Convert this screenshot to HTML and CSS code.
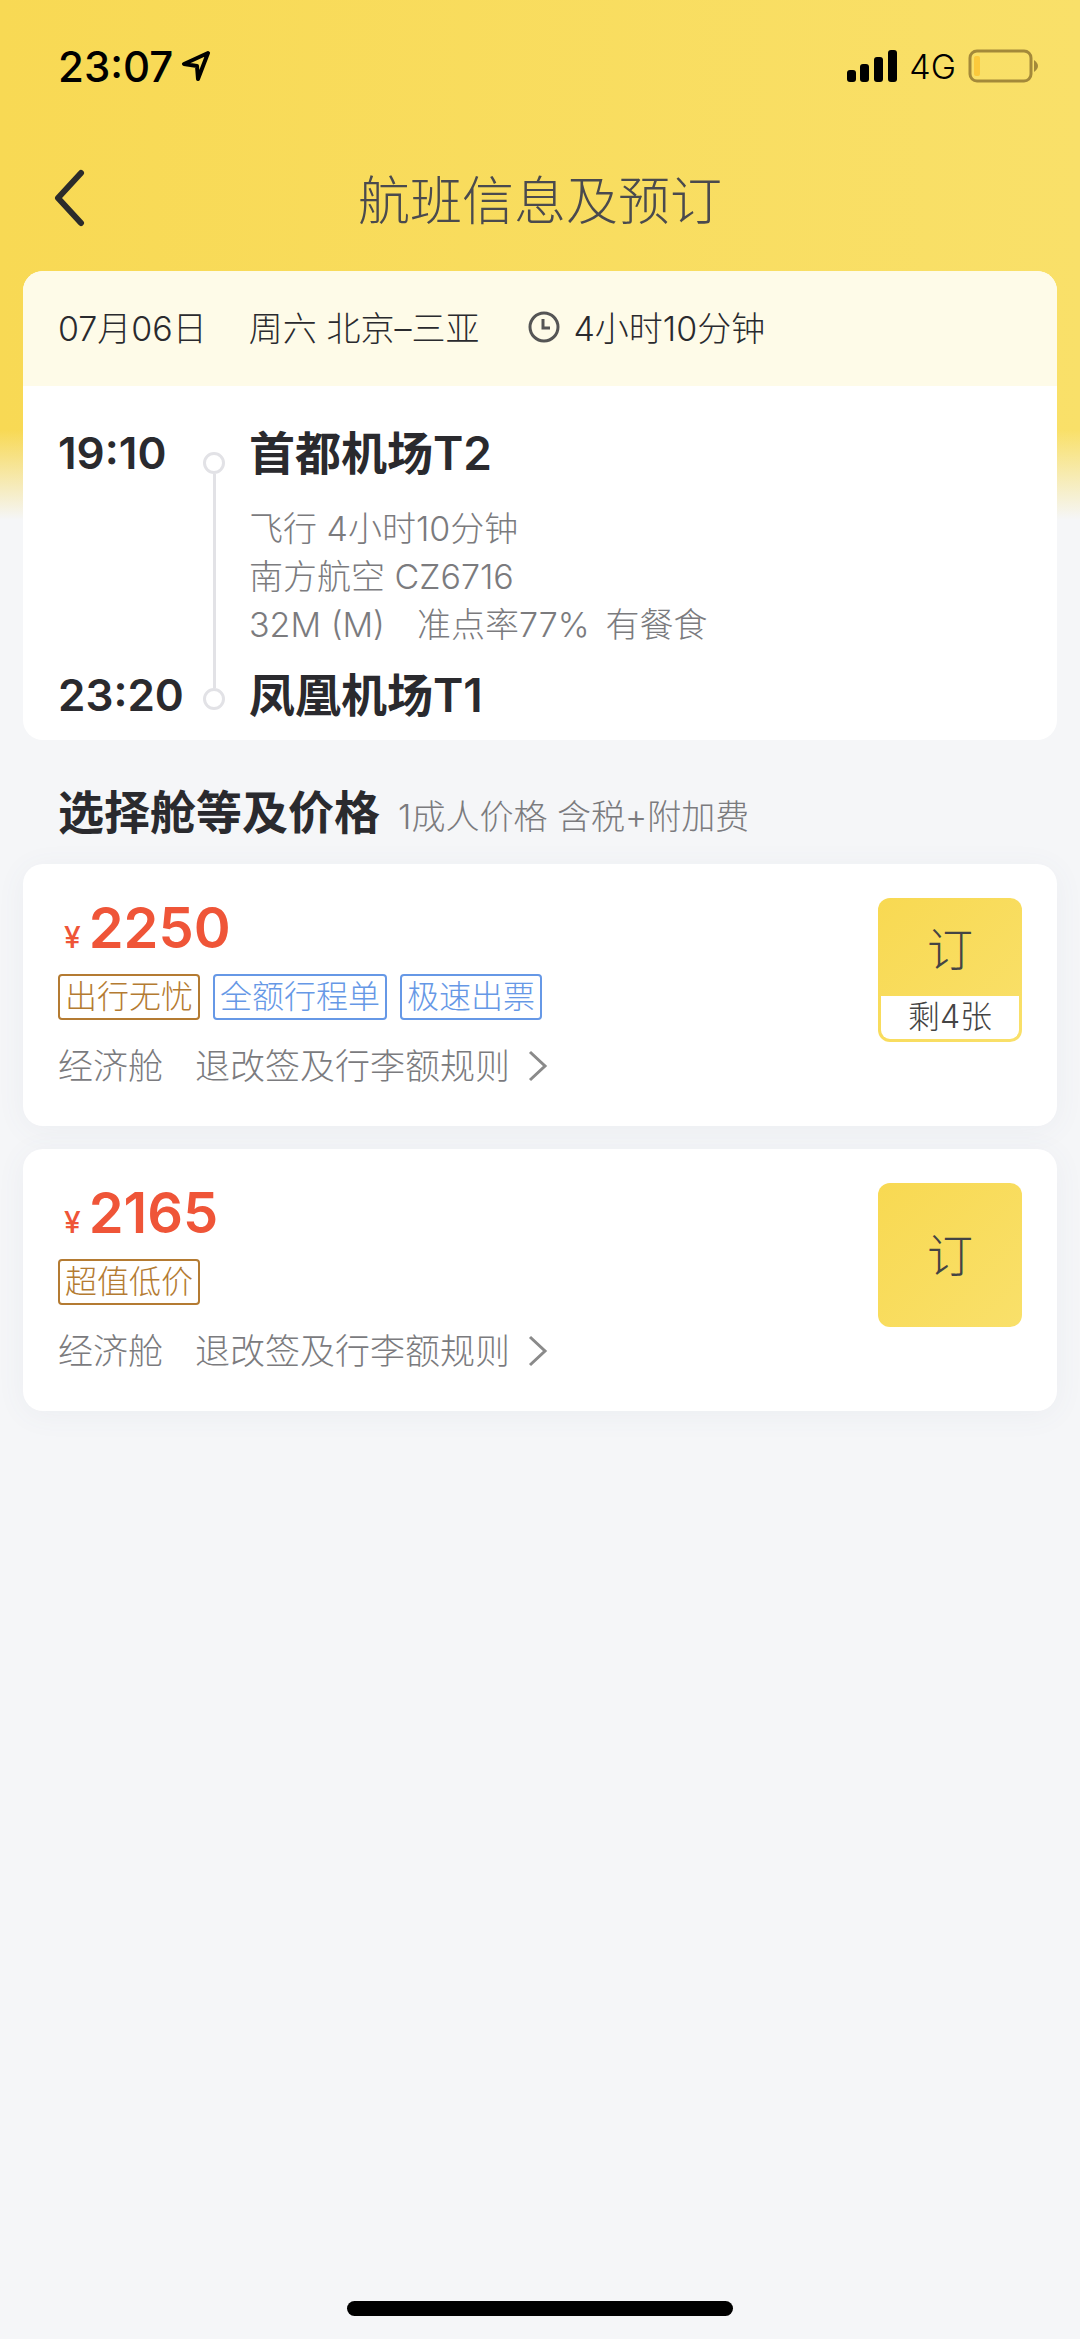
FILE: index.html
```html
<!DOCTYPE html>
<html lang="zh-CN">
<head>
  <meta charset="UTF-8">
  <meta name="viewport" content="width=device-width, initial-scale=1.0">
  <title>航班信息及预订</title>
  <link rel="stylesheet" href="styles.css">
</head>
<body>
  <div class="status-bar">
    <span class="status-time">23:07</span>
    <svg class="location" width="30" height="30" viewBox="0 0 30 30">
      <path d="M27 2 L3 13 L16 15 L17 28 Z" fill="none" stroke="#000" stroke-width="4" stroke-linejoin="round"/>
    </svg>
    <div class="status-right">
      <svg width="50" height="32" viewBox="0 0 50 32">
        <rect x="0" y="20" width="9" height="12" rx="3"/>
        <rect x="13" y="14" width="9" height="18" rx="3"/>
        <rect x="27" y="7" width="9" height="25" rx="3"/>
        <rect x="41" y="0" width="9" height="32" rx="3"/>
      </svg>
      <span class="network">4G</span>
      <svg width="72" height="34" viewBox="0 0 72 34">
        <rect x="2" y="2" width="61" height="30" rx="7" fill="none" stroke="#a3893a" stroke-width="3"/>
        <rect x="6" y="7" width="6" height="20" rx="2" fill="#fbc93c"/>
        <path d="M66 11 Q70 14 70 17 Q70 20 66 23 Z" fill="#a3893a"/>
      </svg>
    </div>
  </div>

  <header class="nav">
    <button type="button" class="back" aria-label="返回">
      <svg width="32" height="60" viewBox="0 0 32 60">
        <path d="M27 5 L4 30 L27 55" fill="none" stroke="#2b2b2b" stroke-width="6" stroke-linecap="round" stroke-linejoin="round"/>
      </svg>
    </button>
    <h1>航班信息及预订</h1>
  </header>

  <main>
    <section class="card flight">
      <div class="flight-head">
        <span class="date">07月06日</span>
        <span class="route">周六 北京–三亚</span>
        <svg width="34" height="34" viewBox="0 0 34 34">
          <circle cx="17" cy="17" r="14" fill="none" stroke="#555" stroke-width="3"/>
          <path d="M16 9 V18 H23" fill="none" stroke="#555" stroke-width="3"/>
        </svg>
        <span>4小时10分钟</span>
      </div>
      <div class="flight-body">
        <div class="times">
          <span>19:10</span>
          <span>23:20</span>
        </div>
        <div class="track">
          <i class="dot"></i>
          <i class="line"></i>
          <i class="dot"></i>
        </div>
        <div class="stops">
          <h2>首都机场T2</h2>
          <div class="detail">
            <p>飞行 4小时10分钟</p>
            <p>南方航空 CZ6716</p>
            <p class="extras"><span>32M (M)</span><span>准点率77%</span><span>有餐食</span></p>
          </div>
          <h2>凤凰机场T1</h2>
        </div>
      </div>
    </section>

    <div class="section-title">
      <h2>选择舱等及价格</h2>
      <span>1成人价格 含税+附加费</span>
    </div>

    <section class="card fare">
      <div class="fare-info">
        <div class="price"><small>¥</small>2250</div>
        <div class="tags">
          <span class="tag gold">出行无忧</span>
          <span class="tag blue">全额行程单</span>
          <span class="tag blue">极速出票</span>
        </div>
        <div class="rules">
          <span>经济舱</span>
          <a href="#">退改签及行李额规则
            <svg width="20" height="32" viewBox="0 0 20 32">
              <path d="M2 2 L17 16 L2 30" fill="none" stroke="#8a8a8a" stroke-width="3"/>
            </svg>
          </a>
        </div>
      </div>
      <button type="button" class="book">
        <span class="book-label">订</span>
        <span class="left">剩4张</span>
      </button>
    </section>

    <section class="card fare">
      <div class="fare-info">
        <div class="price"><small>¥</small>2165</div>
        <div class="tags">
          <span class="tag gold">超值低价</span>
        </div>
        <div class="rules">
          <span>经济舱</span>
          <a href="#">退改签及行李额规则
            <svg width="20" height="32" viewBox="0 0 20 32">
              <path d="M2 2 L17 16 L2 30" fill="none" stroke="#8a8a8a" stroke-width="3"/>
            </svg>
          </a>
        </div>
      </div>
      <button type="button" class="book">
        <span class="book-label">订</span>
      </button>
    </section>
  </main>

  <div class="home-indicator"></div>
</body>
</html>
```
FILE: styles.css
```css
* {
  box-sizing: border-box;
  margin: 0;
  padding: 0;
}

body {
  display: flex;
  flex-direction: column;
  min-height: 100vh;
  /* yellow top that fades into the grey page */
  background:
    linear-gradient(to bottom, rgba(245, 246, 248, 0) 430px, #f5f6f8 520px),
    linear-gradient(to right, #f8d954, #f9e069);
  font-family: Inter, "Noto Sans CJK SC", sans-serif;
  font-size: 34px;
  font-weight: 300;
  color: #2a2a2e;
}

svg {
  display: block;
  flex: none;
}

button {
  border: none;
  background: none;
  font: inherit;
  color: inherit;
  cursor: pointer;
}

/* status bar */
.status-bar {
  display: flex;
  align-items: center;
  height: 132px;
  padding: 0 40px 0 58px;
  color: #000;
}

.status-time {
  font-size: 42px;
  font-weight: 500;
}

.location {
  margin-left: 8px;
}

.status-right {
  display: flex;
  align-items: center;
  gap: 12px;
  margin-left: auto;
}

.network {
  font-size: 34px;
}

/* title */
.nav {
  display: grid;
  grid-template-columns: 80px 1fr 80px;
  align-items: center;
  height: 139px;
  padding: 0 54px 8px;
}

.nav h1 {
  font-size: 52px;
  font-weight: 300;
  text-align: center;
  color: #4a4a4e;
}

/* cards */
main {
  padding: 0 23px;
}

.card {
  background: #fff;
  border-radius: 20px;
  overflow: hidden;
}

.flight-head {
  display: flex;
  align-items: center;
  height: 115px;
  padding: 0 35px 4px;
  background: #fefbe8;
}

.date {
  margin-right: 42px;
}

.route {
  margin-right: 48px;
}

.flight-head svg {
  margin-right: 12px;
}

.flight-body {
  display: flex;
  height: 354px;
  padding: 42px 35px 20px;
}

.times {
  display: flex;
  flex-direction: column;
  justify-content: space-between;
  width: 145px;
  font-size: 44px;
  font-weight: 600;
  line-height: 50px;
}

.track {
  display: flex;
  flex-direction: column;
  align-items: center;
  width: 22px;
  padding: 24px 0 10px;
}

.dot {
  width: 22px;
  height: 22px;
  border: 3px solid #e2e2e6;
  border-radius: 50%;
}

.line {
  flex: 1;
  width: 3px;
  background: #e2e2e6;
}

.stops {
  display: flex;
  flex-direction: column;
  justify-content: space-between;
  margin-left: 24px;
}

.stops h2 {
  font-size: 46px;
  line-height: 50px;
  font-weight: 600;
}

.detail {
  padding-top: 6px;
  line-height: 48px;
  color: #7b7b7e;
}

.extras {
  display: flex;
}

.extras span:nth-child(1) {
  margin-right: 32px;
}

.extras span:nth-child(2) {
  margin-right: 16px;
}

.section-title {
  display: flex;
  align-items: baseline;
  gap: 18px;
  padding: 38px 35px 18px;
  color: #7b7b7e;
}

.section-title h2 {
  font-size: 46px;
  line-height: 68px;
  color: #2a2a2e;
}

/* fares */
.fare {
  display: flex;
  justify-content: space-between;
  align-items: flex-start;
  height: 262px;
  padding: 34px 35px 0;
  overflow: visible;
  box-shadow: 0 4px 30px rgba(90, 100, 130, 0.06);
}

.fare + .fare {
  margin-top: 23px;
}

.price {
  padding-left: 6px;
  font-size: 56px;
  line-height: 60px;
  font-weight: 600;
  color: #ef5538;
}

.price small {
  margin-right: 8px;
  font-size: 30px;
  font-weight: 500;
}

.tags {
  display: flex;
  gap: 13px;
  margin-top: 7px;
}

.tag {
  height: 46px;
  padding: 0 5px;
  border: 2px solid;
  border-radius: 4px;
  font-size: 32px;
  line-height: 42px;
}

.gold {
  color: #b47b32;
}

.blue {
  color: #6698e6;
}

.rules {
  display: flex;
  gap: 32px;
  margin-top: 22px;
  font-size: 35px;
  line-height: 48px;
  color: #7b7b7e;
}

.rules a {
  display: flex;
  align-items: center;
  gap: 18px;
  color: inherit;
  text-decoration: none;
}

.book {
  display: flex;
  flex-direction: column;
  width: 144px;
  height: 144px;
  padding: 3px;
  border-radius: 12px;
  background: linear-gradient(135deg, #f8d952, #f9e06a);
  color: #444;
}

.book-label {
  display: flex;
  flex: 1;
  align-items: center;
  justify-content: center;
  width: 100%;
  font-size: 46px;
  line-height: 50px;
}

.left {
  width: 100%;
  height: 43px;
  border-radius: 0 0 9px 9px;
  background: #fff;
  font-size: 32px;
  line-height: 42px;
}

.home-indicator {
  width: 386px;
  height: 15px;
  margin: auto auto 23px;
  border-radius: 8px;
  background: #000;
}
```
